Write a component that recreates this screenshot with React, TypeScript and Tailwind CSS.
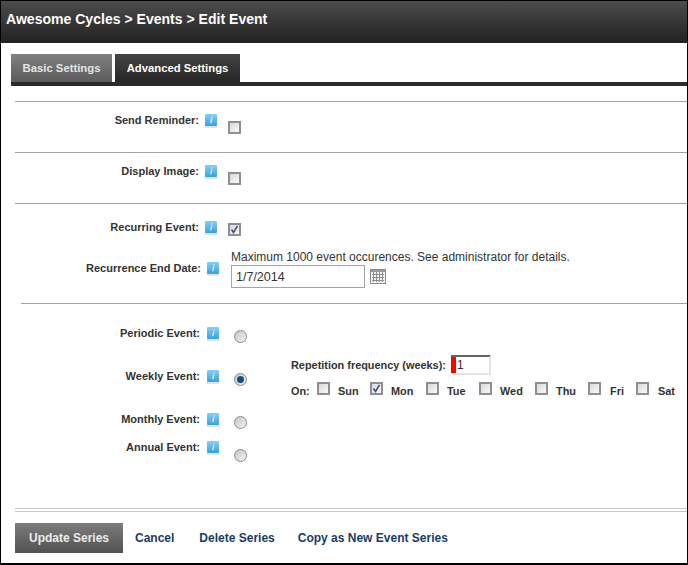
import React from 'react';

const InfoIcon = () => (
  <svg width="12" height="14" viewBox="0 0 12 14" className="shrink-0 block">
    <defs>
      <linearGradient id="infoBlue" x1="0" y1="0" x2="0" y2="1">
        <stop offset="0" stopColor="#86d0f4" />
        <stop offset="1" stopColor="#3a9fe0" />
      </linearGradient>
    </defs>
    <rect x="0" y="11" width="12" height="3" fill="#dde5ea" />
    <rect x="0" y="0" width="12" height="12" rx="1" fill="url(#infoBlue)" />
    <path d="M6.6 2.2h1.3l-.3 1.2H6.3zM6 4.6h1.3L6.5 9.2H5.2z" fill="#dff3fc" />
  </svg>
);

const Check = ({ checked = false, className = '' }: { checked?: boolean; className?: string }) => (
  <span
    className={`relative block w-[13px] h-[13px] shrink-0 border-2 border-[#8f8f8f] bg-gradient-to-br from-[#d8d8d8] to-[#fafafa] ${className}`}
  >
    {checked && (
      <svg width="9" height="9" viewBox="0 0 9 9" className="absolute left-0 top-0">
        <path d="M1.5 4.5 L3.5 7.5 L7.5 0.8" fill="none" stroke="#3d4f8f" strokeWidth="1.6" />
      </svg>
    )}
  </span>
);

const Radio = ({ checked = false, className = '' }: { checked?: boolean; className?: string }) => (
  <span
    className={`flex items-center justify-center w-[13px] h-[13px] shrink-0 rounded-full border border-[#8c8c8c] bg-gradient-to-br from-[#c4c4c4] to-[#f4f4f4] ${className}`}
  >
    {checked && <span className="block w-[7px] h-[7px] rounded-full bg-[#0f4f86]" />}
  </span>
);

const CalendarIcon = () => (
  <svg width="16" height="15" viewBox="0 0 16 15" className="block">
    <rect x="0.5" y="0.5" width="15" height="14" fill="#f3f3f3" stroke="#8a8a8a" />
    <rect x="1" y="1" width="14" height="2" fill="#9a9a9a" />
    <path
      d="M3.5 3v10M6.5 3v10M9.5 3v10M12.5 3v10M2 5.5h12M2 8.5h12M2 11.5h12"
      stroke="#8f8f8f"
      strokeWidth="1"
      fill="none"
    />
  </svg>
);

const Label = ({ text, width }: { text: string; width: string }) => (
  <span className={`${width} h-[16px] leading-[16px] text-[11px] text-right font-bold text-[#333333] whitespace-nowrap`}>
    {text}
  </span>
);

const days = [
  { name: 'Sun', box: 'ml-0', label: 'ml-[8px] w-[21px]' },
  { name: 'Mon', box: 'ml-[11px]', label: 'ml-[8px] w-[24px]', checked: true },
  { name: 'Tue', box: 'ml-[11px]', label: 'ml-[8px] w-[20px]' },
  { name: 'Wed', box: 'ml-[12px]', label: 'ml-[8px] w-[24px]' },
  { name: 'Thu', box: 'ml-[11px]', label: 'ml-[8px] w-[21px]' },
  { name: 'Fri', box: 'ml-[11px]', label: 'ml-[9px] w-[14px]' },
  { name: 'Sat', box: 'ml-[12px]', label: 'ml-[9px] w-[17px]' },
];

export default function App() {
  return (
    <div className="w-[688px] h-[565px] bg-white border-x border-b-2 border-black flex flex-col text-[10.9px] text-[#333333] font-['Liberation_Sans',Arial,sans-serif] overflow-hidden">
      <header className="h-[43px] shrink-0 border-t border-black bg-gradient-to-b from-[#4c4c4c] to-[#222222] pl-[5px] pt-[9px]">
        <h1 className="text-[14.05px] leading-[18px] font-bold text-white">
          Awesome Cycles &gt; Events &gt; Edit Event
        </h1>
      </header>

      <nav className="ml-[10px] mt-[11px] flex h-[28px] shrink-0 font-bold text-[11.3px]">
        <span className="w-[101px] flex items-center justify-center bg-gradient-to-b from-[#818181] to-[#5c5c5c] text-[#e4e4e4]">
          Basic Settings
        </span>
        <span className="ml-[3px] w-[125px] flex items-center justify-center bg-gradient-to-b from-[#454545] to-[#262626] text-white">
          Advanced Settings
        </span>
      </nav>
      <div className="ml-[10px] h-[4px] shrink-0 bg-[#2b2b2b]" />

      <section className="ml-[14px] mt-[15px] h-[51px] shrink-0 border-t border-[#a0a0a0]">
        <div className="flex pt-[10px]">
          <Label text="Send Reminder:" width="w-[184px]" />
          <span className="ml-[6px] mt-[2px]"><InfoIcon /></span>
          <Check className="ml-[11px] mt-[9px]" />
        </div>
      </section>

      <section className="ml-[14px] h-[51px] shrink-0 border-t border-[#a0a0a0]">
        <div className="flex pt-[10px]">
          <Label text="Display Image:" width="w-[184px]" />
          <span className="ml-[6px] mt-[2px]"><InfoIcon /></span>
          <Check className="ml-[11px] mt-[9px]" />
        </div>
      </section>

      <section className="ml-[14px] h-[100px] shrink-0 border-t border-[#a0a0a0]">
        <div className="flex pt-[15px]">
          <Label text="Recurring Event:" width="w-[184px]" />
          <span className="ml-[6px] mt-[2px]"><InfoIcon /></span>
          <Check checked className="ml-[11px] mt-[4px]" />
        </div>
        <div className="flex mt-[14px]">
          <div className="flex pt-[10px] h-[39px]">
            <Label text="Recurrence End Date:" width="w-[186px]" />
            <span className="ml-[6px] mt-[2px]"><InfoIcon /></span>
          </div>
          <div className="ml-[12px]">
            <div className="text-[12px] leading-[14px] whitespace-nowrap text-[#333333]">
              Maximum 1000 event occurences. See administrator for details.
            </div>
            <div className="mt-[1px] flex items-center">
              <div className="w-[134px] h-[23px] border border-[#a3a3a3] pl-[4px] text-[12.5px] leading-[23px] text-[#333333]">
                1/7/2014
              </div>
              <span className="ml-[5px]"><CalendarIcon /></span>
            </div>
          </div>
        </div>
      </section>

      <section className="ml-[20px] flex-1 border-t border-[#a0a0a0]">
        <div className="flex h-[43px] pt-[21px]">
          <Label text="Periodic Event:" width="w-[179px]" />
          <span className="ml-[7px] mt-[2px]"><InfoIcon /></span>
          <Radio className="ml-[15px] mt-[5px]" />
        </div>
        <div className="flex h-[43px] pt-[21px]">
          <Label text="Weekly Event:" width="w-[179px]" />
          <span className="ml-[7px] mt-[2px]"><InfoIcon /></span>
          <Radio checked className="ml-[15px] mt-[5px]" />
          <div className="ml-[44px] -mt-[13px] font-bold">
            <div className="flex items-center h-[20px] whitespace-nowrap">
              <span className="w-[160px]">Repetition frequency (weeks):</span>
              <span className="w-[40px] h-[20px] border-2 border-l-0 border-[#e2e2e2] border-t-[#666666] font-normal text-[12px] leading-[16px] flex">
                <span className="w-[5px] h-full bg-[#ff0000] shrink-0" />
                <span className="pl-[1px] text-[#4a2a1a]">1</span>
              </span>
            </div>
            <div className="mt-[7px] flex items-start">
              <span className="w-[26px] h-[16px] leading-[16px] mt-[1px]">On:</span>
              {days.map((day) => (
                <React.Fragment key={day.name}>
                  <Check checked={day.checked} className={day.box} />
                  <span className={`${day.label} h-[16px] leading-[16px] mt-[1px] whitespace-nowrap`}>{day.name}</span>
                </React.Fragment>
              ))}
            </div>
          </div>
        </div>
        <div className="flex h-[43px] pt-[21px]">
          <Label text="Monthly Event:" width="w-[179px]" />
          <span className="ml-[7px] mt-[2px]"><InfoIcon /></span>
          <Radio className="ml-[15px] mt-[5px]" />
        </div>
        <div className="flex pt-[6px]">
          <Label text="Annual Event:" width="w-[179px]" />
          <span className="ml-[7px] mt-[2px]"><InfoIcon /></span>
          <Radio className="ml-[15px] mt-[10px]" />
        </div>
      </section>

      <div className="ml-[14px] h-[4px] shrink-0 border-y border-[#c8c8c8]" />
      <footer className="ml-[14px] mt-[11px] h-[30px] mb-[10px] shrink-0 flex items-center font-bold text-[12px] text-[#1b3a66]">
        <span className="w-[108px] h-full flex items-center justify-center bg-gradient-to-b from-[#7c7c7c] to-[#525252] text-[#ececec]">
          Update Series
        </span>
        <span className="ml-[12px]">Cancel</span>
        <span className="ml-[25px]">Delete Series</span>
        <span className="ml-[23px]">Copy as New Event Series</span>
      </footer>
    </div>
  );
}
